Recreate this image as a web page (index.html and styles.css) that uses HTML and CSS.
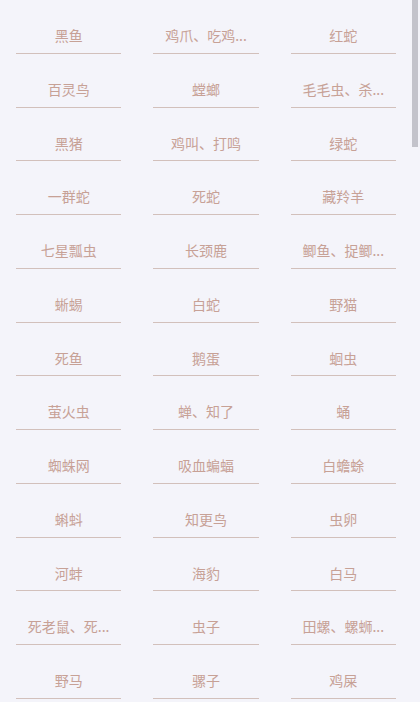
FILE: index.html
```html
<!DOCTYPE html>
<html lang="zh-CN">
<head>
<meta charset="UTF-8" />
<meta name="viewport" content="width=device-width, initial-scale=1" />
<title>动物</title>
<link rel="stylesheet" href="styles.css">
</head>
<body>

<div class="page">
<div class="list">
  <div class="cell"><div class="item">黑鱼</div></div>
  <div class="cell"><div class="item">鸡爪、吃鸡...</div></div>
  <div class="cell"><div class="item">红蛇</div></div>
  <div class="cell"><div class="item">百灵鸟</div></div>
  <div class="cell"><div class="item">螳螂</div></div>
  <div class="cell"><div class="item">毛毛虫、杀...</div></div>
  <div class="cell"><div class="item">黑猪</div></div>
  <div class="cell"><div class="item">鸡叫、打鸣</div></div>
  <div class="cell"><div class="item">绿蛇</div></div>
  <div class="cell"><div class="item">一群蛇</div></div>
  <div class="cell"><div class="item">死蛇</div></div>
  <div class="cell"><div class="item">藏羚羊</div></div>
  <div class="cell"><div class="item">七星瓢虫</div></div>
  <div class="cell"><div class="item">长颈鹿</div></div>
  <div class="cell"><div class="item">鲫鱼、捉鲫...</div></div>
  <div class="cell"><div class="item">蜥蜴</div></div>
  <div class="cell"><div class="item">白蛇</div></div>
  <div class="cell"><div class="item">野猫</div></div>
  <div class="cell"><div class="item">死鱼</div></div>
  <div class="cell"><div class="item">鹅蛋</div></div>
  <div class="cell"><div class="item">蛔虫</div></div>
  <div class="cell"><div class="item">萤火虫</div></div>
  <div class="cell"><div class="item">蝉、知了</div></div>
  <div class="cell"><div class="item">蛹</div></div>
  <div class="cell"><div class="item">蜘蛛网</div></div>
  <div class="cell"><div class="item">吸血蝙蝠</div></div>
  <div class="cell"><div class="item">白蟾蜍</div></div>
  <div class="cell"><div class="item">蝌蚪</div></div>
  <div class="cell"><div class="item">知更鸟</div></div>
  <div class="cell"><div class="item">虫卵</div></div>
  <div class="cell"><div class="item">河蚌</div></div>
  <div class="cell"><div class="item">海豹</div></div>
  <div class="cell"><div class="item">白马</div></div>
  <div class="cell"><div class="item">死老鼠、死...</div></div>
  <div class="cell"><div class="item">虫子</div></div>
  <div class="cell"><div class="item">田螺、螺蛳...</div></div>
  <div class="cell"><div class="item">野马</div></div>
  <div class="cell"><div class="item">骡子</div></div>
  <div class="cell"><div class="item">鸡屎</div></div>
  <!-- 下面的需要滚动才能看到 -->
  <div class="cell"><div class="item">老虎</div></div>
  <div class="cell"><div class="item">狮子</div></div>
  <div class="cell"><div class="item">大象</div></div>
  <div class="cell"><div class="item">猴子</div></div>
  <div class="cell"><div class="item">熊猫</div></div>
  <div class="cell"><div class="item">狐狸</div></div>
  <div class="cell"><div class="item">狼</div></div>
  <div class="cell"><div class="item">兔子</div></div>
  <div class="cell"><div class="item">小狗</div></div>
  <div class="cell"><div class="item">黑狗</div></div>
  <div class="cell"><div class="item">白狗</div></div>
  <div class="cell"><div class="item">黄狗</div></div>
  <div class="cell"><div class="item">猫</div></div>
  <div class="cell"><div class="item">黑猫</div></div>
  <div class="cell"><div class="item">白猫</div></div>
  <div class="cell"><div class="item">老鼠</div></div>
  <div class="cell"><div class="item">白老鼠</div></div>
  <div class="cell"><div class="item">蟑螂</div></div>
  <div class="cell"><div class="item">蚂蚁</div></div>
  <div class="cell"><div class="item">蜜蜂</div></div>
  <div class="cell"><div class="item">马蜂</div></div>
  <div class="cell"><div class="item">蝴蝶</div></div>
  <div class="cell"><div class="item">蜻蜓</div></div>
  <div class="cell"><div class="item">蚊子</div></div>
  <div class="cell"><div class="item">苍蝇</div></div>
  <div class="cell"><div class="item">蚯蚓</div></div>
  <div class="cell"><div class="item">蜈蚣</div></div>
  <div class="cell"><div class="item">蝎子</div></div>
  <div class="cell"><div class="item">壁虎</div></div>
  <div class="cell"><div class="item">青蛙</div></div>
  <div class="cell"><div class="item">乌龟</div></div>
  <div class="cell"><div class="item">甲鱼</div></div>
  <div class="cell"><div class="item">螃蟹</div></div>
  <div class="cell"><div class="item">虾</div></div>
  <div class="cell"><div class="item">龙虾</div></div>
  <div class="cell"><div class="item">鲤鱼</div></div>
  <div class="cell"><div class="item">金鱼</div></div>
  <div class="cell"><div class="item">鲨鱼</div></div>
  <div class="cell"><div class="item">鲸鱼</div></div>
  <div class="cell"><div class="item">海豚</div></div>
  <div class="cell"><div class="item">章鱼</div></div>
  <div class="cell"><div class="item">鳄鱼</div></div>
  <div class="cell"><div class="item">蟒蛇</div></div>
  <div class="cell"><div class="item">眼镜蛇</div></div>
  <div class="cell"><div class="item">青蛇</div></div>
  <div class="cell"><div class="item">黄蛇</div></div>
  <div class="cell"><div class="item">花蛇</div></div>
  <div class="cell"><div class="item">小蛇</div></div>
  <div class="cell"><div class="item">大蛇</div></div>
  <div class="cell"><div class="item">蛇咬人</div></div>
  <div class="cell"><div class="item">孔雀</div></div>
  <div class="cell"><div class="item">凤凰</div></div>
  <div class="cell"><div class="item">老鹰</div></div>
  <div class="cell"><div class="item">乌鸦</div></div>
  <div class="cell"><div class="item">喜鹊</div></div>
  <div class="cell"><div class="item">燕子</div></div>
  <div class="cell"><div class="item">鸽子</div></div>
  <div class="cell"><div class="item">麻雀</div></div>
  <div class="cell"><div class="item">鹦鹉</div></div>
  <div class="cell"><div class="item">猫头鹰</div></div>
  <div class="cell"><div class="item">仙鹤</div></div>
  <div class="cell"><div class="item">天鹅</div></div>
  <div class="cell"><div class="item">鸭子</div></div>
  <div class="cell"><div class="item">鹅</div></div>
  <div class="cell"><div class="item">公鸡</div></div>
  <div class="cell"><div class="item">母鸡</div></div>
  <div class="cell"><div class="item">小鸡</div></div>
  <div class="cell"><div class="item">鸡蛋</div></div>
  <div class="cell"><div class="item">鸭蛋</div></div>
  <div class="cell"><div class="item">牛</div></div>
  <div class="cell"><div class="item">黄牛</div></div>
  <div class="cell"><div class="item">水牛</div></div>
  <div class="cell"><div class="item">奶牛</div></div>
  <div class="cell"><div class="item">羊</div></div>
  <div class="cell"><div class="item">山羊</div></div>
  <div class="cell"><div class="item">绵羊</div></div>
  <div class="cell"><div class="item">马</div></div>
  <div class="cell"><div class="item">黑马</div></div>
  <div class="cell"><div class="item">驴</div></div>
  <div class="cell"><div class="item">骆驼</div></div>
  <div class="cell"><div class="item">猪</div></div>
  <div class="cell"><div class="item">小猪</div></div>
  <div class="cell"><div class="item">野猪</div></div>
  <div class="cell"><div class="item">鹿</div></div>
  <div class="cell"><div class="item">梅花鹿</div></div>
  <div class="cell"><div class="item">袋鼠</div></div>
  <div class="cell"><div class="item">刺猬</div></div>
  <div class="cell"><div class="item">松鼠</div></div>
  <div class="cell"><div class="item">蝙蝠</div></div>
  <div class="cell"><div class="item">熊</div></div>
  <div class="cell"><div class="item">黑熊</div></div>
  <div class="cell"><div class="item">北极熊</div></div>
  <div class="cell"><div class="item">豹子</div></div>
  <div class="cell"><div class="item">斑马</div></div>
  <div class="cell"><div class="item">犀牛</div></div>
  <div class="cell"><div class="item">河马</div></div>
  <div class="cell"><div class="item">狗咬人</div></div>
  <div class="cell"><div class="item">被狗追</div></div>
  <div class="cell"><div class="item">猫咬人</div></div>
  <div class="cell"><div class="item">死猫</div></div>
  <div class="cell"><div class="item">死狗</div></div>
  <div class="cell"><div class="item">死鸡</div></div>
  <div class="cell"><div class="item">死猪</div></div>
  <div class="cell"><div class="item">死牛</div></div>
  <div class="cell"><div class="item">死马</div></div>
  <div class="cell"><div class="item">杀鸡</div></div>
  <div class="cell"><div class="item">杀猪</div></div>
  <div class="cell"><div class="item">杀羊</div></div>
  <div class="cell"><div class="item">杀鱼</div></div>
  <div class="cell"><div class="item">钓鱼</div></div>
  <div class="cell"><div class="item">抓鱼</div></div>
  <div class="cell"><div class="item">买鱼</div></div>
  <div class="cell"><div class="item">鱼塘</div></div>
  <div class="cell"><div class="item">泥鳅</div></div>
  <div class="cell"><div class="item">黄鳝</div></div>
  <div class="cell"><div class="item">鳗鱼</div></div>
  <div class="cell"><div class="item">带鱼</div></div>
  <div class="cell"><div class="item">草鱼</div></div>
  <div class="cell"><div class="item">鲶鱼</div></div>
  <div class="cell"><div class="item">蛤蟆</div></div>
  <div class="cell"><div class="item">蜗牛</div></div>
  <div class="cell"><div class="item">蚂蚱</div></div>
  <div class="cell"><div class="item">蝗虫</div></div>
  <div class="cell"><div class="item">蟋蟀</div></div>
  <div class="cell"><div class="item">蚕</div></div>
  <div class="cell"><div class="item">蛆</div></div>
  <div class="cell"><div class="item">跳蚤</div></div>
  <div class="cell"><div class="item">虱子</div></div>
  <div class="cell"><div class="item">臭虫</div></div>
  <div class="cell"><div class="item">蛀虫</div></div>
  <div class="cell"><div class="item">白蚁</div></div>
  <div class="cell"><div class="item">蛾子</div></div>
  <div class="cell"><div class="item">蜘蛛</div></div>
  <div class="cell"><div class="item">黑蜘蛛</div></div>
  <div class="cell"><div class="item">蛇蛋</div></div>
  <div class="cell"><div class="item">鸟窝</div></div>
  <div class="cell"><div class="item">鸟蛋</div></div>
  <div class="cell"><div class="item">小鸟</div></div>
  <div class="cell"><div class="item">飞鸟</div></div>
  <div class="cell"><div class="item">鸟屎</div></div>
  <div class="cell"><div class="item">狗屎</div></div>
  <div class="cell"><div class="item">牛粪</div></div>
  <div class="cell"><div class="item">马车</div></div>
  <div class="cell"><div class="item">骑马</div></div>
  <div class="cell"><div class="item">骑牛</div></div>
  <div class="cell"><div class="item">放羊</div></div>
  <div class="cell"><div class="item">养鱼</div></div>
</div>
</div>

<!-- 截图里滚动条不显示，用一个浮层代替 -->
<div class="scroll-thumb"></div>

</body>
</html>
```

FILE: styles.css
```css
html, body {
  margin: 0;
  height: 100%;
  overflow: hidden;
  background: #f4f4fa;
}
body {
  font-family: "Noto Sans CJK SC", "Noto Sans", sans-serif;
  font-size: 14px;
  color: #c7a196;
}
.page {
  height: 100%;
  overflow-y: auto;
  padding-right: 8px;
  box-sizing: border-box;
}
.list {
  display: grid;
  grid-template-columns: repeat(3, 1fr);
  padding-bottom: 18px;
}
.cell {
  padding: 0 16px;
  min-width: 0;
}
.item {
  padding-top: 19px;
  line-height: 33.76px;
  text-align: center;
  white-space: nowrap;
  overflow: hidden;
  border-bottom: 1px solid #d2c0bb;
}
.scroll-thumb {
  position: fixed;
  top: 0;
  right: 2px;
  width: 6px;
  height: 147px;
  background: #c3c3cb;
}
```
